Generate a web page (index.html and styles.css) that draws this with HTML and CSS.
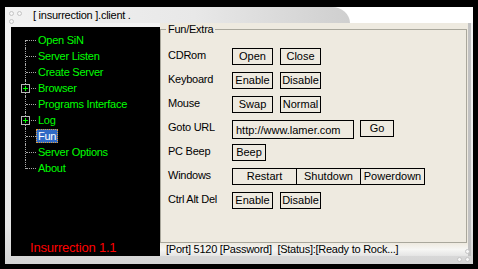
FILE: index.html
```html
<!DOCTYPE html>
<html lang="en">
<head>
    <meta charset="UTF-8">
    <title>[ insurrection ].client .</title>
    <link rel="stylesheet" href="styles.css">
</head>
<body>

    <div class="window">
        <span class="dot tl-1"></span>
        <span class="dot tl-2"></span>
        <span class="dot tl-3"></span>
        <span class="dot br-1"></span>
        <span class="dot br-2"></span>
        <span class="dot br-3"></span>

        <div class="titlebar">
            <div class="title-tab">[ insurrection ].client .</div>
        </div>

        <div class="main">
            <div class="side">
                <div class="tree-panel">
                    <ul class="tree">
                        <li><span class="node">Open SiN</span></li>
                        <li><span class="node">Server Listen</span></li>
                        <li><span class="node">Create Server</span></li>
                        <li class="folder">
                            <svg class="expander" width="9" height="9" viewBox="0 0 9 9">
                                <rect x="0.5" y="0.5" width="8" height="8" fill="#000" stroke="#b8b8b8"/>
                                <path d="M2 4.5h5M4.5 2v5" stroke="#00ff00"/>
                            </svg>
                            <span class="node">Browser</span>
                        </li>
                        <li><span class="node">Programs Interface</span></li>
                        <li class="folder">
                            <svg class="expander" width="9" height="9" viewBox="0 0 9 9">
                                <rect x="0.5" y="0.5" width="8" height="8" fill="#000" stroke="#b8b8b8"/>
                                <path d="M2 4.5h5M4.5 2v5" stroke="#00ff00"/>
                            </svg>
                            <span class="node">Log</span>
                        </li>
                        <li><span class="node selected">Fun</span></li>
                        <li><span class="node">Server Options</span></li>
                        <li><span class="node">About</span></li>
                    </ul>
                    <div class="brand">Insurrection 1.1</div>
                </div>
            </div>

            <div class="content">
                <fieldset class="group">
                    <legend>Fun/Extra</legend>
                    <div class="rows">
                        <div class="row">
                            <span class="label">CDRom</span>
                            <div class="controls">
                                <button>Open</button>
                                <button>Close</button>
                            </div>
                        </div>
                        <div class="row">
                            <span class="label">Keyboard</span>
                            <div class="controls">
                                <button>Enable</button>
                                <button>Disable</button>
                            </div>
                        </div>
                        <div class="row">
                            <span class="label">Mouse</span>
                            <div class="controls">
                                <button>Swap</button>
                                <button>Normal</button>
                            </div>
                        </div>
                        <div class="row">
                            <span class="label">Goto URL</span>
                            <div class="controls url">
                                <input type="text" value="http://www.lamer.com">
                                <button class="small">Go</button>
                            </div>
                        </div>
                        <div class="row">
                            <span class="label">PC Beep</span>
                            <div class="controls">
                                <button class="small">Beep</button>
                            </div>
                        </div>
                        <div class="row">
                            <span class="label">Windows</span>
                            <div class="controls joined">
                                <button>Restart</button>
                                <button>Shutdown</button>
                                <button>Powerdown</button>
                            </div>
                        </div>
                        <div class="row">
                            <span class="label">Ctrl Alt Del</span>
                            <div class="controls">
                                <button>Enable</button>
                                <button>Disable</button>
                            </div>
                        </div>
                    </div>
                </fieldset>
                <div class="status">[Port] 5120 [Password]&nbsp; [Status]:[Ready to Rock...]</div>
            </div>
        </div>
    </div>

</body>
</html>
```

FILE: styles.css
```css
* {
    box-sizing: border-box;
}

body {
    margin: 0;
    width: 478px;
    height: 269px;
    overflow: hidden;
    background-color: #000;
    font-family: "Liberation Sans", Arial, sans-serif;
    font-size: 11px;
    letter-spacing: -0.25px;
    color: #000;
}

.window {
    position: relative;
    margin: 7px 0 0 5px;
    width: 468px;
    height: 257px;
    background: linear-gradient(to bottom, #f4f4f4, #e6e6e6 85%, #d4d4d4);
    display: flex;
    flex-direction: column;
}

/* little rings on the skin corners */
.dot {
    position: absolute;
    width: 5px;
    height: 5px;
    border-radius: 50%;
    border: 1px solid #c4c4c4;
    background-color: #f6f6f6;
}

.tl-1 { left: 4px; top: 4px; }
.tl-2 { left: 12px; top: 4px; }
.tl-3 { left: 4px; top: 12px; }
.br-1 { left: 460px; top: 242px; }
.br-2 { left: 452px; top: 250px; }
.br-3 { left: 460px; top: 250px; }

.titlebar {
    height: 16px;
    flex: none;
    background-color: #fff;
}

.title-tab {
    width: 345px;
    height: 16px;
    padding-left: 28px;
    line-height: 17px;
    background: linear-gradient(to right, #f2f2f2, #e8e8e8 55%, #cfcfcf);
    border-top-right-radius: 18px 16px;
}

.main {
    display: flex;
    height: 233px;
}

.side {
    width: 155px;
    padding: 4px 0 0 6px;
}

.tree-panel {
    width: 149px;
    height: 229px;
    padding-top: 5px;
    background-color: #000;
    display: flex;
    flex-direction: column;
}

.tree {
    list-style: none;
    margin: 0;
    padding: 0;
}

.tree li {
    position: relative;
    height: 16px;
    padding-left: 25px;
    line-height: 16px;
}

.tree li::before {
    content: "";
    position: absolute;
    left: 14px;
    top: 0;
    height: 16px;
    border-left: 1px dotted #a8a8a8;
}

.tree li:first-child::before {
    top: 8px;
    height: 8px;
}

.tree li:last-child::before {
    height: 9px;
}

.tree li::after {
    content: "";
    position: absolute;
    left: 15px;
    top: 8px;
    width: 10px;
    border-top: 1px dotted #a8a8a8;
}

.expander {
    position: absolute;
    left: 10px;
    top: 4px;
    z-index: 1;
}

.node {
    padding: 1px 2px;
    color: #00ff00;
}

.node.selected {
    color: #fff;
    background-color: #316ac5;
    outline: 1px dotted #e0a040;
    outline-offset: -1px;
}

.brand {
    margin-top: auto;
    padding: 0 0 1px 19px;
    font-size: 13px;
    line-height: 15px;
    letter-spacing: -0.2px;
    color: #ff0000;
}

.content {
    width: 311px;
    display: flex;
    flex-direction: column;
    background-color: #eeeae0;
    border-right: 3px solid #c2c2c2;
}

.group {
    height: 220px;
    margin: 0 1px 0 0;
    padding: 0 0 0 7px;
    border: 1px solid #a9a79c;
}

.group legend {
    margin-left: -2px;
    padding: 0 2px;
    line-height: 13px;
}

.rows {
    padding-top: 12px;
}

.row {
    display: grid;
    grid-template-columns: 64px auto;
    height: 24px;
}

.label {
    line-height: 14px;
}

.controls {
    display: flex;
    gap: 7px;
}

.controls button {
    width: 41px;
    height: 17px;
    padding: 0;
    border: 1px solid #000;
    background: transparent;
    font: inherit;
    line-height: 15px;
    color: #000;
}

.controls button.small {
    width: 34px;
}

.controls.url {
    gap: 6px;
}

.controls input {
    width: 122px;
    height: 19px;
    padding: 0 0 0 3px;
    border: 1px solid #000;
    background: transparent;
    font: inherit;
    color: #000;
}

.controls.joined {
    gap: 0;
}

.controls.joined button {
    width: 65px;
}

.controls.joined button + button {
    margin-left: -1px;
}

.status {
    height: 13px;
    padding-left: 6px;
    line-height: 13px;
    background: linear-gradient(to bottom, #eeeae0, #f6f6f4 50%, #e4e4e4);
}
```
